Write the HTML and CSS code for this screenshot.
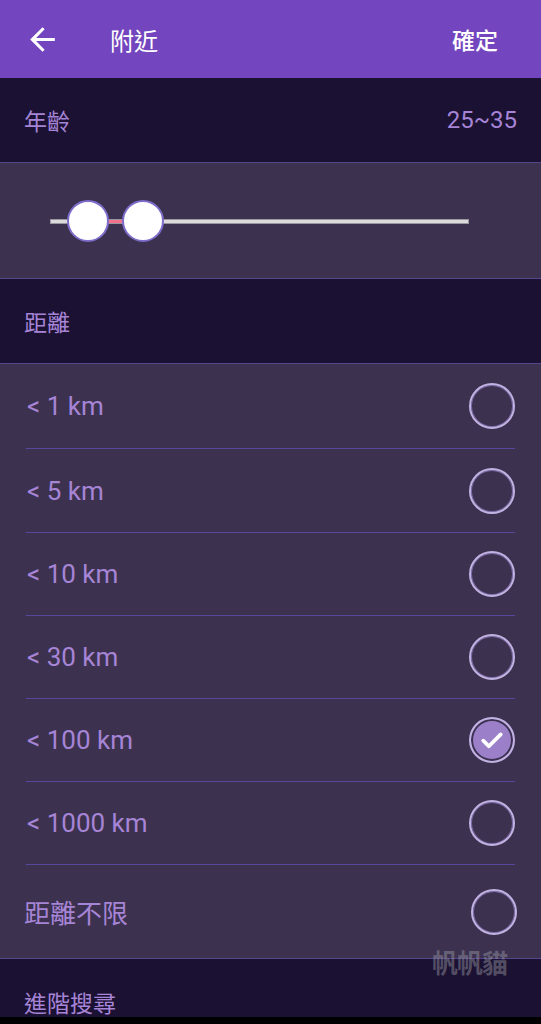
FILE: index.html
```html
<!DOCTYPE html>
<html lang="zh-Hant">
<head>
  <meta charset="UTF-8">
  <meta name="viewport" content="width=device-width, initial-scale=1.0">
  <title>附近</title>
  <link rel="stylesheet" href="styles.css">
</head>
<body>
  <div class="page">
    <div class="topbar">
      <svg class="back" viewBox="0 0 24 24" width="37" height="37">
        <path d="M20 11H7.83l5.59-5.59L12 4l-8 8 8 8 1.41-1.41L7.83 13H20v-2z" fill="#fff"/>
      </svg>
      <div class="title">附近</div>
      <div class="confirm">確定</div>
    </div>

    <div class="section-head">
      <span class="label">年齡</span>
      <span class="value">25~35</span>
    </div>

    <div class="slider-box">
      <div class="track">
        <div class="range"></div>
        <div class="thumb thumb-min"></div>
        <div class="thumb thumb-max"></div>
      </div>
    </div>

    <div class="section-head">
      <span class="label">距離</span>
    </div>

    <div class="list">
      <div class="row"><span class="opt">&lt; 1 km</span><span class="radio"></span></div>
      <div class="row"><span class="opt">&lt; 5 km</span><span class="radio"></span></div>
      <div class="row"><span class="opt">&lt; 10 km</span><span class="radio"></span></div>
      <div class="row"><span class="opt">&lt; 30 km</span><span class="radio"></span></div>
      <div class="row"><span class="opt">&lt; 100 km</span>
        <span class="radio checked">
          <svg viewBox="0 0 24 24" width="30" height="30">
            <path d="M5 12.5l4.5 4.5L19 7.5" fill="none" stroke="#fff" stroke-width="3" stroke-linecap="round" stroke-linejoin="round"/>
          </svg>
        </span>
      </div>
      <div class="row"><span class="opt">&lt; 1000 km</span><span class="radio"></span></div>
      <div class="row last"><span class="opt cjk">距離不限</span><span class="radio"></span></div>
    </div>

    <div class="section-head advanced">
      <span class="label">進階搜尋</span>
    </div>

    <div class="watermark">帆帆貓</div>
  </div>
</body>
</html>
```

FILE: styles.css
```css
body {
  margin: 0;
  background-color: #000;
  font-family: Roboto, "Noto Sans CJK TC", sans-serif;
  overflow: hidden;
}

.page {
  position: relative;
  width: 541px;
  height: 1017px;
  overflow: hidden;
}

.topbar {
  height: 78px;
  background-color: #7345be;
  display: flex;
  align-items: center;
  padding: 0 43px 0 24px;
  color: #fff;
}

.back {
  display: block;
}

.title {
  font-family: "Noto Sans CJK TC", sans-serif;
  font-size: 24px;
  margin-left: 49px;
  flex: 1;
}

.confirm {
  font-family: "Noto Sans CJK TC", sans-serif;
  font-size: 23px;
  font-weight: 500;
}

.section-head {
  height: 84px;
  background-color: #1b1132;
  border-bottom: 1px solid #54468a;
  display: flex;
  align-items: center;
  justify-content: space-between;
  padding: 0 24px 0 24px;
  color: #a684d6;
}

.label {
  font-family: "Noto Sans CJK TC", sans-serif;
  font-size: 23px;
}

.value {
  font-size: 24px;
}

.slider-box {
  height: 115px;
  background-color: #3c3250;
  border-bottom: 1px solid #54468a;
  display: flex;
  align-items: center;
  padding-left: 50px;
}

.track {
  position: relative;
  width: 419px;
  height: 5px;
  background-color: #dcdadc;
  border: 1px solid #9a96a0;
  box-sizing: border-box;
  margin-top: 2px;
}

.range {
  position: absolute;
  left: 50px;
  width: 30px;
  top: 0;
  bottom: 0;
  background-color: #f2728e;
}

.thumb {
  position: absolute;
  top: -20px;
  width: 38px;
  height: 38px;
  border-radius: 50%;
  background-color: #fff;
  border: 2px solid #7d6cca;
}

.thumb-min {
  left: 16px;
}

.thumb-max {
  left: 71px;
}

.list {
  background-color: #3c3250;
  border-bottom: 1px solid #54468a;
}

.row {
  height: 82px;
  margin: 0 26px;
  border-bottom: 1px solid #55489a;
  display: flex;
  align-items: center;
  justify-content: space-between;
}

.row:first-child {
  height: 84px;
}

.row:nth-child(2) {
  height: 83px;
}

.row.last {
  height: 93px;
  border-bottom: none;
  margin: 0 24px 0 24px;
}

.opt {
  font-size: 26px;
  color: #a684d6;
  padding-left: 1px;
}

.opt.cjk {
  font-family: "Noto Sans CJK TC", sans-serif;
  font-size: 26px;
  padding-left: 0;
}

.radio {
  width: 42px;
  height: 42px;
  border-radius: 50%;
  border: 2px solid #c2b2e2;
  box-shadow: inset 0 0 0 1px #7c6aa8;
  display: flex;
  align-items: center;
  justify-content: center;
}

.radio.checked {
  background-color: #9b7fc9;
  box-shadow: inset 0 0 0 2px #3c3250;
}

.advanced {
  border-bottom: none;
  align-items: flex-start;
  padding-top: 31px;
  box-sizing: border-box;
  height: 59px;
}

.advanced .label {
  line-height: 24px;
}

.watermark {
  position: absolute;
  right: 34px;
  top: 943px;
  font-family: "Noto Sans CJK TC", sans-serif;
  font-size: 26px;
  font-weight: 700;
  color: rgba(165, 165, 175, 0.42);
  letter-spacing: -1px;
}
```
